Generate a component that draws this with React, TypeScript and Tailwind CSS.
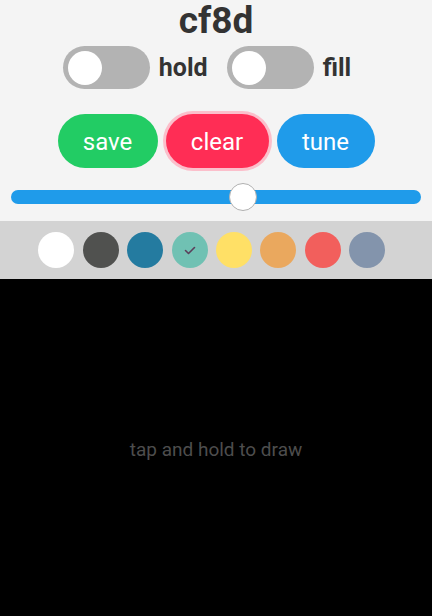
import React, { useState } from 'react';

const swatches = ['#ffffff', '#50514f', '#247ba0', '#70c1b3', '#ffe066', '#eaa85e', '#f25f5c', '#8394ac'];

const Toggle: React.FC<{ label: string }> = ({ label }) => {
  const [on, setOn] = useState(false);
  return (
    <div className="flex items-center">
      <button
        onClick={() => setOn(!on)}
        className={`w-[87px] h-[43px] rounded-full bg-[#b3b3b3] flex items-center px-[5px] ${on ? 'justify-end' : 'justify-start'}`}
      >
        <span className="block w-[34px] h-[34px] rounded-full bg-white" />
      </button>
      <span className="ml-[9px] mr-[19px] text-[25px] font-bold text-[#333333] leading-none">{label}</span>
    </div>
  );
};

export default function App() {
  const [selected, setSelected] = useState(3);

  return (
    <div className="w-full h-[616px] flex flex-col bg-black" style={{ fontFamily: 'Roboto, "Liberation Sans", sans-serif' }}>
      <div className="bg-[#f4f4f4] flex flex-col items-center">
        <h1 className="text-[37px] leading-[42px] font-bold text-[#333333]">cf8d</h1>

        <div className="mt-[4px] flex justify-center pl-[1px]">
          <Toggle label="hold" />
          <Toggle label="fill" />
        </div>

        <div className="mt-[25px] flex items-center gap-[8px]">
          <button className="w-[100px] h-[54px] pt-[2px] rounded-full bg-[#22cc64] text-white text-[24px]">save</button>
          <button className="w-[103px] h-[54px] pt-[2px] rounded-full bg-[#ff2d55] text-white text-[24px] ring-[3px] ring-[#fbbfcb]">clear</button>
          <button className="w-[98px] h-[54px] pt-[2px] rounded-full bg-[#1f9bea] text-white text-[24px]">tune</button>
        </div>

        <div className="mt-[22px] mb-[17px] w-[410px] h-[14px] rounded-full bg-[#1f9bea] relative">
          <div className="absolute left-[218px] top-[-7px] w-[28px] h-[28px] rounded-full bg-white border border-[#b0b0b0]" />
        </div>
      </div>

      <div className="h-[58px] bg-[#d3d3d3] flex items-center justify-center">
        {swatches.map((c, i) => (
          <button
            key={c}
            onClick={() => setSelected(i)}
            className="w-[36px] h-[36px] mr-[8.4px] rounded-full flex items-center justify-center"
            style={{ backgroundColor: c }}
          >
            {selected === i && (
              <svg width="12" height="9" viewBox="0 0 12 9" fill="none">
                <polyline points="1.5,4.5 4.5,7.5 10.5,1.5" stroke="#5b3f5a" strokeWidth="1.6" strokeLinecap="round" strokeLinejoin="round" />
              </svg>
            )}
          </button>
        ))}
      </div>

      <div className="flex-1 flex items-center justify-center pt-[5px]">
        <span className="text-[19px] text-[#4d4d4d]">tap and hold to draw</span>
      </div>
    </div>
  );
}
